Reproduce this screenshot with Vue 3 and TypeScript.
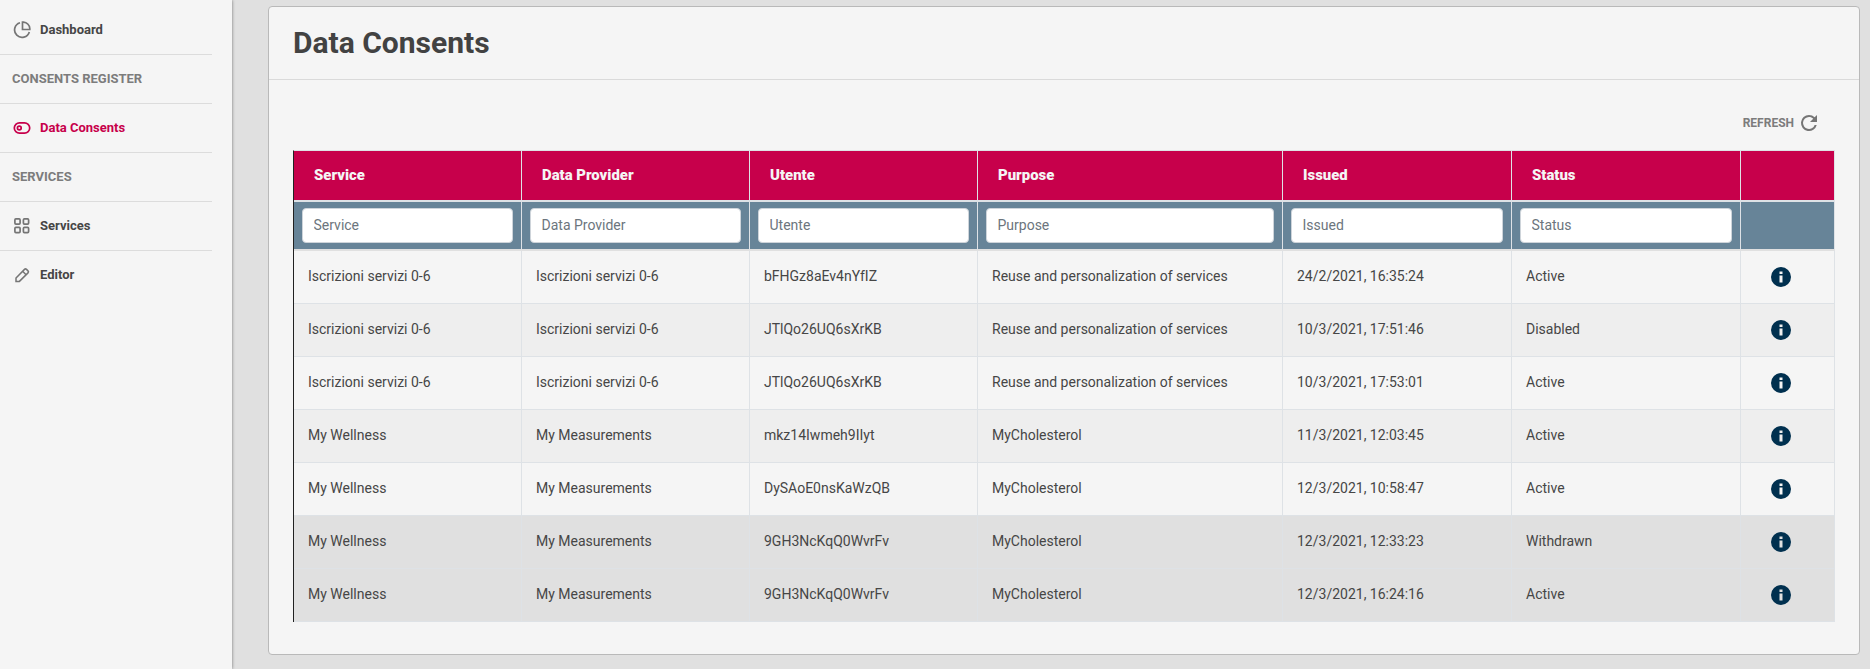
<script setup lang="ts">
interface Column {
  key: string
  label: string
}

interface Consent {
  service: string
  provider: string
  user: string
  purpose: string
  issued: string
  status: string
}

const columns: Column[] = [
  { key: 'service', label: 'Service' },
  { key: 'provider', label: 'Data Provider' },
  { key: 'user', label: 'Utente' },
  { key: 'purpose', label: 'Purpose' },
  { key: 'issued', label: 'Issued' },
  { key: 'status', label: 'Status' },
]

const iscrizioni = { service: 'Iscrizioni servizi 0-6', provider: 'Iscrizioni servizi 0-6', purpose: 'Reuse and personalization of services' }
const wellness = { service: 'My Wellness', provider: 'My Measurements', purpose: 'MyCholesterol' }

const consents: Consent[] = [
  { ...iscrizioni, user: 'bFHGz8aEv4nYfIZ', issued: '24/2/2021, 16:35:24', status: 'Active' },
  { ...iscrizioni, user: 'JTlQo26UQ6sXrKB', issued: '10/3/2021, 17:51:46', status: 'Disabled' },
  { ...iscrizioni, user: 'JTlQo26UQ6sXrKB', issued: '10/3/2021, 17:53:01', status: 'Active' },
  { ...wellness, user: 'mkz14Iwmeh9IIyt', issued: '11/3/2021, 12:03:45', status: 'Active' },
  { ...wellness, user: 'DySAoE0nsKaWzQB', issued: '12/3/2021, 10:58:47', status: 'Active' },
  { ...wellness, user: '9GH3NcKqQ0WvrFv', issued: '12/3/2021, 12:33:23', status: 'Withdrawn' },
  { ...wellness, user: '9GH3NcKqQ0WvrFv', issued: '12/3/2021, 16:24:16', status: 'Active' },
]

function rowTone(index: number): string {
  if (index > 4) return 'selected'
  return index % 2 ? 'even' : ''
}
</script>

<template>
  <div class="page">
    <nav class="sidebar">
      <a class="item">
        <svg class="icon" viewBox="0 0 18 18">
          <path d="M7 1.7A7.5 7.5 0 1 0 16.3 11M9.5 1.2V8.5H16.8V7.5A7 7 0 0 0 10.5 1.2Z" />
        </svg>
        <span>Dashboard</span>
      </a>
      <div class="group">CONSENTS REGISTER</div>
      <a class="item active">
        <svg class="icon" viewBox="0 0 18 18">
          <rect x="1.3" y="3.8" width="15.4" height="10.4" rx="5.2" />
          <circle cx="6.3" cy="9" r="1.9" />
        </svg>
        <span>Data Consents</span>
      </a>
      <div class="group">SERVICES</div>
      <a class="item">
        <svg class="icon" viewBox="0 0 18 18">
          <rect x="1.9" y="1.9" width="5.2" height="5.2" rx="1" />
          <rect x="10.4" y="1.9" width="5.2" height="5.2" rx="1" />
          <rect x="1.9" y="10.4" width="5.2" height="5.2" rx="1" />
          <rect x="10.4" y="10.4" width="5.2" height="5.2" rx="1" />
        </svg>
        <span>Services</span>
      </a>
      <a class="item">
        <svg class="icon thin" viewBox="0 0 18 18">
          <path d="M3 15.4V12L11.5 3.4Q12.5 2.4 13.5 3.4L15 4.9Q16 5.9 15 6.9L6.4 15.4ZM9.6 5.3L13.1 8.8" />
        </svg>
        <span>Editor</span>
      </a>
    </nav>

    <main class="card">
      <header class="card-header"><h1>Data Consents</h1></header>
      <div class="card-body">
        <button class="refresh" type="button">
          <span>REFRESH</span>
          <svg viewBox="0 0 24 24">
            <path d="M17.65 6.35A7.96 7.96 0 0 0 12 4a8 8 0 1 0 7.73 10h-2.08A6 6 0 1 1 12 6c1.66 0 3.14.69 4.22 1.78L13 11h7V4z" />
          </svg>
        </button>

        <div class="table">
          <div class="row head">
            <div v-for="c in columns" :key="c.key" class="cell">{{ c.label }}</div>
            <div class="cell"></div>
          </div>
          <div class="row filters">
            <div v-for="c in columns" :key="c.key" class="cell">
              <input type="text" :placeholder="c.label" />
            </div>
            <div class="cell"></div>
          </div>
          <div v-for="(r, i) in consents" :key="i" class="row data" :class="rowTone(i)">
            <div class="cell">{{ r.service }}</div>
            <div class="cell">{{ r.provider }}</div>
            <div class="cell">{{ r.user }}</div>
            <div class="cell">{{ r.purpose }}</div>
            <div class="cell">{{ r.issued }}</div>
            <div class="cell">{{ r.status }}</div>
            <div class="cell action">
              <svg viewBox="0 0 24 24">
                <path d="M12 2a10 10 0 1 0 0 20 10 10 0 0 0 0-20zm1.5 15.5h-3v-7h3zm0-8.5h-3V6.5h3z" />
              </svg>
            </div>
          </div>
        </div>
      </div>
    </main>
  </div>
</template>

<style>
body {
  margin: 0;
  overflow: hidden;
}
</style>

<style scoped>
.page {
  display: flex;
  box-sizing: border-box;
  height: 669px;
  background: #e0e0e0;
  font-family: Roboto, "Liberation Sans", sans-serif;
  color: #464646;
}
.sidebar {
  box-sizing: border-box;
  flex: none;
  width: 232px;
  padding: 6px 20px 0 0;
  background: #f5f5f5;
  box-shadow: 0 0 3px rgba(0, 0, 0, 0.5);
}
.item,
.group {
  box-sizing: border-box;
  display: flex;
  align-items: center;
  height: 49px;
  padding: 0 12px;
  border-bottom: 1px solid #dcdcdc;
  font-size: 13px;
  font-weight: 700;
}
.item {
  padding-bottom: 1px;
}
.item:last-child {
  border-bottom-color: transparent;
}
.group {
  padding-bottom: 1px;
  color: #7c7c7c;
}
.icon {
  width: 18px;
  height: 18px;
  margin: 1px 9px 0 1px;
  fill: none;
  stroke: #757575;
  stroke-width: 1.7;
}
.thin {
  stroke-width: 1.5;
}
.active {
  color: #c7004b;
}
.active .icon {
  stroke: #c7004b;
}
.card {
  box-sizing: border-box;
  width: 1592px;
  height: 649px;
  margin: 6px 0 0 36px;
  border: 1px solid #b9b9b9;
  border-radius: 4px;
  background: #f5f5f5;
}
.card-header {
  box-sizing: border-box;
  display: flex;
  align-items: center;
  height: 73px;
  padding: 0 24px 1px;
  border-bottom: 1px solid #dadada;
}
h1 {
  margin: 0;
  font-size: 30px;
  font-weight: 700;
  color: #424242;
}
.card-body {
  display: flex;
  flex-direction: column;
  padding: 32px 24px 0;
}
.refresh {
  display: flex;
  align-items: center;
  align-self: flex-end;
  gap: 3px;
  height: 22px;
  margin: 0 14px 16px 0;
  padding: 0;
  border: 0;
  background: none;
  color: #7c7c7c;
  font: 700 12px Roboto, "Liberation Sans", sans-serif;
}
.refresh svg {
  width: 24px;
  height: 24px;
  fill: #757575;
}
.table {
  width: 1541px;
  border-left: 1px solid #212121;
  border-top: 1px solid #dee2e6;
}
.row {
  display: grid;
  grid-template-columns: 228px 228px 228px 305px 229px 229px 94px;
}
.cell {
  box-sizing: border-box;
  display: flex;
  align-items: center;
  border-right: 1px solid #dee2e6;
}
.head {
  height: 51px;
  background: #c7004b;
  color: #f5f5f5;
  font-size: 14.9px;
  font-weight: 900;
}
.head .cell {
  padding: 0 20px 1px;
  border-bottom: 2px solid #dee2e6;
}
.filters {
  height: 49px;
  background: #678498;
}
.filters .cell {
  padding: 0 8px;
  border-bottom: 2px solid #e0e0e0;
}
input {
  box-sizing: border-box;
  width: 100%;
  height: 35px;
  padding: 0 11px 1px 10.5px;
  border: 1px solid #ced4da;
  border-radius: 4px;
  background: #fff;
  font: 14px Roboto, "Liberation Sans", sans-serif;
}
input::placeholder {
  color: #6c757d;
}
.data {
  height: 53px;
  font-size: 14px;
}
.data .cell {
  padding: 0 14px 3px;
  border-bottom: 1px solid #dee2e6;
}
.even {
  background: #eeeeee;
}
.selected {
  background: #e0e0e0;
}
.data .action {
  justify-content: center;
  padding: 0 14px 1px 0;
}
.action svg {
  width: 24px;
  height: 24px;
  fill: #00304f;
}
</style>
